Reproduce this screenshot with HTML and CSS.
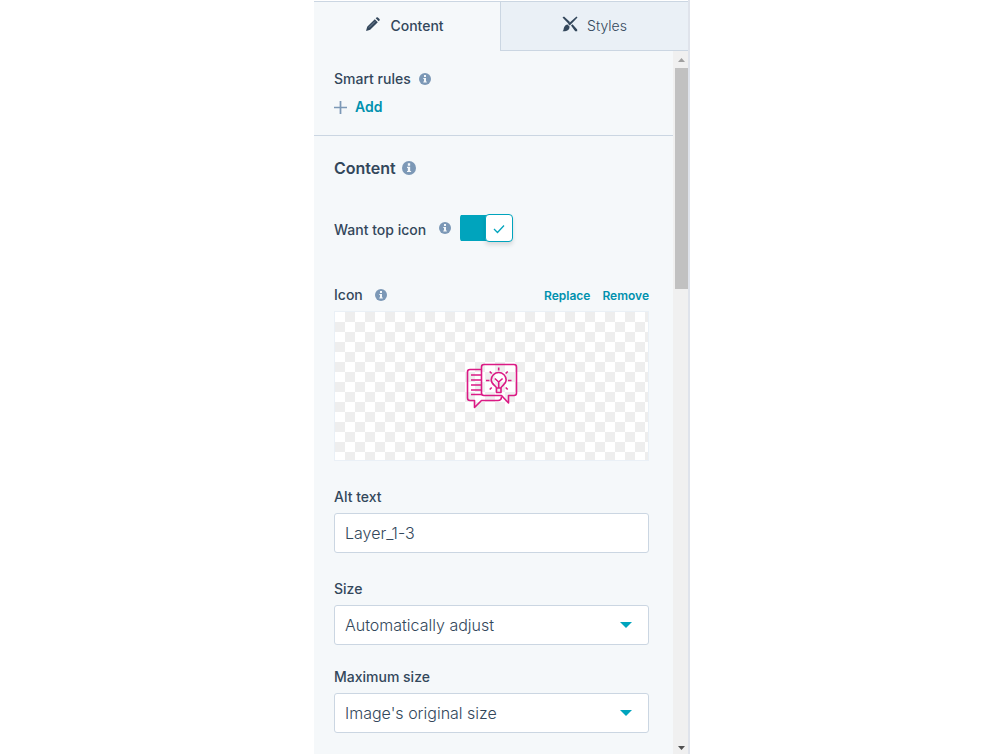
FILE: index.html
```html
<!DOCTYPE html>
<html lang="en">
<head>
<meta charset="utf-8">
<meta name="viewport" content="width=device-width, initial-scale=1">
<title>Module editor</title>
<link rel="stylesheet" href="styles.css">
</head>
<body>
<svg class="sprite" aria-hidden="true">
  <symbol id="info" viewBox="0 0 12 12">
    <circle cx="6" cy="6" r="6" fill="#7c98b6"/>
    <path d="M5 2h2v2H5zM4.3 5H7v3.500h.8v1H4.300v-1H5V6h-.7z" fill="#f5f8fa"/>
  </symbol>
</svg>
<main class="panel">
  <div class="tabs" role="tablist">
    <button class="tab tab-active" role="tab" aria-selected="true">
      <svg class="tab-icon" viewBox="0 0 16 16" aria-hidden="true">
        <path d="M1 15l1.200-4.200 7.600-7.600 3 3-7.600 7.600zM10.700 2.300l.8-.8q.7-.6 1.400 0L14.500 3.100q.6.700 0 1.400l-.8.8z" fill="#33475b"/>
        <path d="M4 11.500l6-6" stroke="#8796a7" stroke-width=".8"/>
      </svg>
      <span>Content</span>
    </button>
    <button class="tab" role="tab" aria-selected="false">
      <svg class="tab-icon" viewBox="0 0 16 16" aria-hidden="true">
        <path d="M.5 1.500L2 .5l6 5.500-1.500 1.700zM9 9.500l1.500-1.200 4.700 5.200v1.700h-2zM14.500.5l1 1-7.700 8-1.700-1.500z" fill="#33475b"/>
        <path d="M5.500 8.500l2 2c.3 3-2 5-7 4.700 1.500-1 .8-2.200 1.600-4 .7-1.500 2-2.500 3.400-2.700z" fill="#33475b"/>
      </svg>
      <span>Styles</span>
    </button>
  </div>
  <div class="body">
    <div class="content">
      <section class="rules">
        <div class="label-row"><span class="label">Smart rules</span><svg class="info"><use href="#info"/></svg></div>
        <button class="add">
          <svg class="plus" viewBox="0 0 12 12" aria-hidden="true"><path d="M6 0v12M0 6h12" stroke="#7c98b6" stroke-width="1.600"/></svg>
          <span>Add</span>
        </button>
      </section>
      <section class="fields">
        <h2 class="heading">Content <svg class="info info-large"><use href="#info"/></svg></h2>
        <div class="toggle-row">
          <label class="label" for="top-icon">Want top icon</label>
          <svg class="info"><use href="#info"/></svg>
          <span class="toggle">
            <input id="top-icon" type="checkbox" checked>
            <svg class="check" viewBox="0 0 12 10" aria-hidden="true"><path d="M1 5l3.500 3.500L11 1.500" fill="none" stroke="#00a4bd" stroke-width="1.300"/></svg>
          </span>
        </div>
        <div class="image-head">
          <div class="label-row label-wide"><span class="label">Icon</span><svg class="info"><use href="#info"/></svg></div>
          <div class="actions"><button class="action">Replace</button><button class="action">Remove</button></div>
        </div>
        <div class="preview">
          <svg class="picture" viewBox="0 0 52 46" role="img" aria-label="Layer_1-3">
            <g fill="none" stroke="#db1a85" stroke-width="1.600" stroke-linejoin="round">
              <path d="M18 1.500h30q2.500 0 2.500 2.500v26q0 2.500-2.500 2.500h-5.500v7.500l-7-7.500H18q-2.500 0-2.500-2.500V4q0-2.500 2.500-2.500z"/>
              <path d="M15.500 6.500H4Q1.500 6.500 1.500 9v26q0 2.500 2.500 2.500h4.500v7l7-7H32q3.500 0 3.500-4"/>
              <path d="M5 12h10M5 17h10M5 22h10M5 27h10M5 31.500h11"/>
              <path d="M30.500 25c0-2-5.300-3.500-5.300-8a7.500 7.500 0 0 1 15 0c0 4.500-5.200 6-5.200 8zM30.500 25h4.500v4.500h-4.500zM32.700 24.500v-6M28.800 15.500l3.900 3.500 3.900-3.500"/>
              <path d="M32.700 4.500v3M20 17.500h3.500M42 17.500h3.500M23.700 8.500l2 2M41.700 8.500l-2 2M23.700 26.500l2-2M41.700 26.500l-2-2"/>
            </g>
          </svg>
        </div>
        <div class="field field-first">
          <label class="label" for="alt">Alt text</label>
          <input class="control" id="alt" type="text" value="Layer_1-3">
        </div>
        <div class="field">
          <label class="label" for="size">Size</label>
          <div class="select"><select class="control" id="size"><option>Automatically adjust</option></select></div>
        </div>
        <div class="field">
          <label class="label" for="max">Maximum size</label>
          <div class="select"><select class="control" id="max"><option>Image's original size</option></select></div>
        </div>
      </section>
    </div>
    <div class="scrollbar" aria-hidden="true">
      <svg class="arrow" viewBox="0 0 7 4"><path d="M0 4h7L3.500 0z" fill="#a0a0a0"/></svg>
      <div class="track"><div class="thumb"></div></div>
      <svg class="arrow" viewBox="0 0 7 4"><path d="M0 0h7L3.500 4z" fill="#505050"/></svg>
    </div>
  </div>
</main>
</body>
</html>
```
FILE: styles.css
```css
*, *::before, *::after { box-sizing: border-box; }
body {
  margin: 0;
  padding-right: 1px;
  background: #fff;
  color: #33475b;
  font: 14px/20px Inter, "Open Sans", sans-serif;
}
button {
  padding: 0;
  border: 0;
  background: none;
  color: inherit;
  font: inherit;
  cursor: pointer;
}
.sprite { display: none; }
.panel {
  display: flex;
  flex-direction: column;
  max-width: 376px;
  height: 100vh;
  margin: 0 auto;
  padding-top: 1px;
  border-right: 2px solid #dfe3eb;
}
.tabs {
  display: grid;
  grid-template-columns: 186px 1fr;
  flex: none;
  height: 50px;
  border-top: 1px solid #cbd6e2;
}
.tab {
  display: flex;
  align-items: center;
  justify-content: center;
  gap: 9px;
  border-left: 1px solid #cbd6e2;
  border-bottom: 1px solid #cbd6e2;
  background: #eaf0f6;
  font-weight: 300;
}
.tab-active {
  padding-right: 6px;
  border-color: #f5f8fa;
  background: #f5f8fa;
  font-weight: 500;
}
.tab-icon { width: 16px; height: 16px; margin-bottom: 4px; }
.body { display: flex; flex: 1; min-height: 0; background: #f5f8fa; }
.content { flex: 1; min-width: 0; overflow: hidden; }
.rules {
  padding: 18px 24px 18px 20px;
  border-bottom: 1px solid #cbd6e2;
}
.label { font-weight: 500; }
.label-row { display: flex; align-items: center; gap: 8px; }
.label-wide { gap: 12px; }
.info { flex: none; width: 12px; height: 12px; }
.info-large { width: 14px; height: 14px; }
.add {
  display: flex;
  align-items: center;
  gap: 8px;
  margin-top: 8px;
  color: #0091ae;
  font-weight: 600;
}
.plus { width: 13px; height: 13px; }
.fields { padding: 20px 24px 20px 20px; }
.heading {
  display: flex;
  align-items: center;
  gap: 6px;
  margin: 0;
  font-size: 16px;
  line-height: 24px;
  font-weight: 600;
}
.toggle-row {
  display: flex;
  align-items: center;
  gap: 9px;
  margin-top: 34px;
}
.toggle-row .label { padding: 4px 4px 0 0; }
.toggle { position: relative; display: flex; }
.toggle input {
  appearance: none;
  display: flex;
  align-items: center;
  justify-content: flex-end;
  width: 53px;
  height: 28px;
  margin: 0;
  background: linear-gradient(#00a4bd, #00a4bd) 0 1px / 40px 26px no-repeat;
  border-radius: 4px;
}
.toggle input::after {
  content: "";
  width: 28px;
  height: 28px;
  border: 1px solid #00a4bd;
  border-radius: 4px;
  background: #fff;
  box-shadow: 0 3px 4px rgba(0, 0, 0, .12);
}
.check {
  position: absolute;
  right: 8px;
  top: 10px;
  width: 12px;
  height: 10px;
  pointer-events: none;
}
.image-head {
  display: flex;
  align-items: center;
  justify-content: space-between;
  margin-top: 43px;
}
.actions { display: flex; gap: 12px; }
.action { padding-top: 2px; color: #0091ae; font-size: 12px; line-height: 18px; font-weight: 600; }
.preview {
  display: flex;
  align-items: center;
  justify-content: center;
  height: 150px;
  margin-top: 6px;
  border: 1px solid #eaf0f6;
  background: repeating-conic-gradient(#eee 0 25%, #fff 0 50%) 0 0 / 20px 20px;
}
.picture { width: 52px; height: 46px; }
.field { margin-top: 22px; }
.field-first { margin: 26px 0; }
.field .label { display: block; margin-bottom: 6px; }
.control {
  display: block;
  appearance: none;
  width: 100%;
  height: 40px;
  padding: 0 10px;
  border: 1px solid #cbd6e2;
  border-radius: 3px;
  background: #fff;
  color: #33475b;
  font: 300 16px/24px Inter, "Open Sans", sans-serif;
}
.select { position: relative; }
.select::after {
  content: "";
  position: absolute;
  top: 17px;
  right: 17px;
  border: 6px solid transparent;
  border-top-color: #00a4bd;
  border-bottom: 0;
  pointer-events: none;
}
.scrollbar {
  display: flex;
  flex-direction: column;
  align-items: center;
  flex: none;
  width: 15px;
  padding: 7px 0 4px 2px;
  background: #f0f0f0;
}
.arrow { width: 7px; height: 4px; }
.track { flex: 1; width: 100%; padding: 6px 0; }
.thumb { height: 221px; background: #c1c1c1; }
```
